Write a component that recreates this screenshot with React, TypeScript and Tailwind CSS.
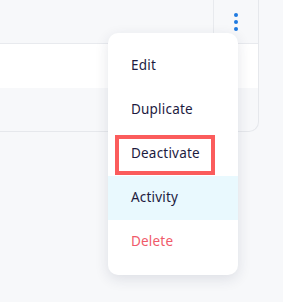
export default function App() {
  const items = ["Edit", "Duplicate", "Deactivate", "Activity", "Delete"];

  return (
    <div className="relative h-[302px] w-full overflow-hidden bg-[#f7f8fa]" style={{ fontFamily: "'Noto Sans', Lato, sans-serif" }}>
      {/* table card */}
      <div className="w-[259px] overflow-hidden rounded-br-[10px] border-r border-b border-[#e6e8ec] bg-[#f7f8fa]">
        <div className="flex h-[44px] border-b border-[#e8eaee]">
          <div className="flex-1 border-r border-[#e8eaee]" />
          <div className="flex w-[44px] items-center justify-center">
            <div className="flex flex-col gap-[3px]">
              <span className="h-[4px] w-[4px] rounded-full bg-[#1f7ae0]" />
              <span className="h-[4px] w-[4px] rounded-full bg-[#1f7ae0]" />
              <span className="h-[4px] w-[4px] rounded-full bg-[#1f7ae0]" />
            </div>
          </div>
        </div>
        <div className="h-[44px] bg-white" />
        <div className="h-[43px]" />
      </div>

      {/* dropdown menu */}
      <div className="absolute left-[108px] top-[33px] w-[130px] rounded-[10px] bg-white py-[11px] shadow-[0_4px_14px_rgba(30,40,70,0.12)]">
        {items.map((label) => {
          const isDelete = label === "Delete";
          const isActive = label === "Activity";
          const isFocused = label === "Deactivate";
          return (
            <div
              key={label}
              className={
                "relative flex h-[44px] items-center pl-[23px] text-[13.5px] font-normal tracking-[0.2px] " +
                (isDelete ? "text-[#f05a6a] " : "text-[#1d1b3f] ") +
                (isActive ? "bg-[#e9f9fe]" : "")
              }
            >
              {isFocused && (
                <span className="absolute left-[7px] top-[3px] h-[40px] w-[100px] border-[4px] border-[#fb5c5c]" />
              )}
              <span className="relative mb-[1px]">{label}</span>
            </div>
          );
        })}
      </div>
    </div>
  );
}
